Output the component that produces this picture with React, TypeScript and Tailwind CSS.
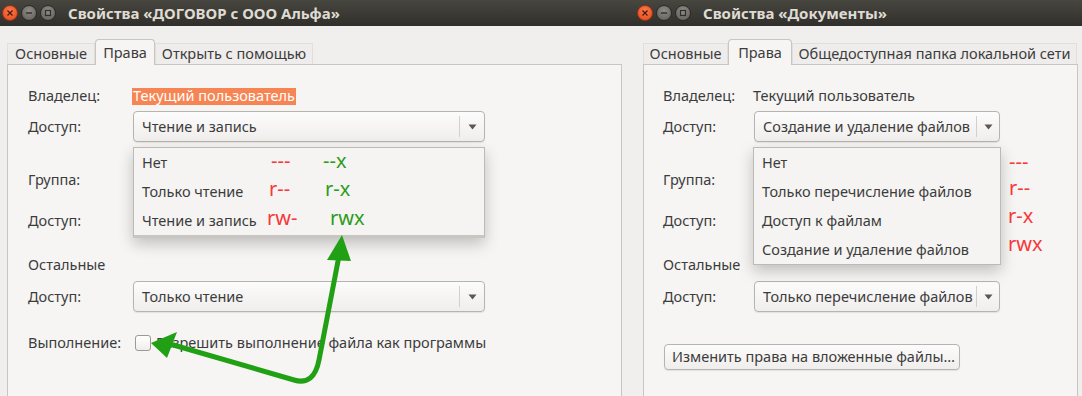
import type { ReactNode } from 'react';

const font = "font-['Noto_Sans','DejaVu_Sans',sans-serif]";

function WindowButtons() {
  return (
    <div className="flex items-center gap-[3px]">
      <div className="w-[16px] h-[16px] rounded-full bg-[radial-gradient(circle_at_50%_35%,#fb7a4a,#e2471b)] border border-[#9e3312] flex items-center justify-center">
        <svg width="8" height="8" viewBox="0 0 8 8">
          <path d="M1.5 1.5L6.5 6.5M6.5 1.5L1.5 6.5" stroke="#4a1a0c" strokeWidth="1.3" />
        </svg>
      </div>
      <div className="w-[16px] h-[16px] rounded-full bg-[radial-gradient(circle_at_50%_35%,#8f8c86,#5e5b56)] border border-[#2c2b28] flex items-center justify-center">
        <svg width="8" height="8" viewBox="0 0 8 8">
          <path d="M1 4H7" stroke="#2f2e2b" strokeWidth="1.4" />
        </svg>
      </div>
      <div className="w-[16px] h-[16px] rounded-full bg-[radial-gradient(circle_at_50%_35%,#8f8c86,#5e5b56)] border border-[#2c2b28] flex items-center justify-center">
        <svg width="8" height="8" viewBox="0 0 8 8">
          <rect x="1.5" y="1.5" width="5" height="5" fill="none" stroke="#2f2e2b" strokeWidth="1.2" />
        </svg>
      </div>
    </div>
  );
}

function TitleBar({ title }: { title: string }) {
  return (
    <div className="h-[26px] flex items-center pl-[2px] bg-gradient-to-b from-[#47463f] to-[#302f2b]">
      <WindowButtons />
      <div className="ml-[12px] text-[15px] font-bold text-[#dfdbd2] leading-none">{title}</div>
    </div>
  );
}

type Tab = { label: string; w: string; active?: boolean };

function Tabs({ tabs }: { tabs: Tab[] }) {
  return (
    <div className="flex items-end h-[26px]">
      {tabs.map((t) =>
        t.active ? (
          <div
            key={t.label}
            className={`${t.w} h-[26px] relative z-10 -mb-px flex items-center justify-center rounded-t-[4px] border border-b-0 border-[#c9c5c0] bg-[#f6f5f4] text-[14.5px] text-[#3c3c3c]`}
          >
            {t.label}
          </div>
        ) : (
          <div
            key={t.label}
            className={`${t.w} h-[21px] flex items-center justify-center border-l border-r border-t border-[#e2dfdb] bg-[#eeedeb] text-[14.5px] text-[#3c3c3c] whitespace-nowrap`}
          >
            {t.label}
          </div>
        )
      )}
      <div className="flex-1" />
    </div>
  );
}

function Combo({ w, value, sep, children }: { w: string; value: string; sep: string; children?: ReactNode }) {
  return (
    <div className={`${w} relative h-[31px]`}>
      <div className="h-full flex items-center rounded-[4px] border border-[#b7b3ad] bg-gradient-to-b from-[#fdfcfc] to-[#efeeec] shadow-[0_1px_1px_rgba(0,0,0,0.08)]">
        <div className="flex-1 pl-[8px] text-[14.5px] text-[#3c3c3c] whitespace-nowrap overflow-hidden">{value}</div>
        <div className={`${sep} h-[21px] border-l border-[#d3d0cb] flex items-center justify-center`}>
          <svg width="9" height="6" viewBox="0 0 9 6">
            <path d="M0.5 0.5H8.5L4.5 5.5Z" fill="#5a5853" />
          </svg>
        </div>
      </div>
      {children}
    </div>
  );
}

function Label({ w, children }: { w: string; children: ReactNode }) {
  return <div className={`${w} shrink-0 text-[14.5px] text-[#3c3c3c]`}>{children}</div>;
}

const red = "absolute text-[20px] leading-none text-[#f6383a] whitespace-nowrap";
const green = "absolute text-[20px] leading-none text-[#2c9c1a] whitespace-nowrap";

function LeftWindow() {
  return (
    <div className="w-[635px] h-full relative flex flex-col">
      <TitleBar title="Свойства «ДОГОВОР с ООО Альфа»" />
      <div className="flex-1 flex flex-col bg-[#f0efed] pl-[7px] pr-[13px] pt-[12px]">
        <Tabs
          tabs={[
            { label: 'Основные', w: 'w-[88px]' },
            { label: 'Права', w: 'w-[60px]', active: true },
            { label: 'Открыть с помощью', w: 'w-[158px]' },
          ]}
        />
        <div className="flex-1 border border-b-0 border-[#c9c5c0] bg-[#f6f5f4] pl-[20px] pt-[22px]">
          <div className="h-[18px] flex items-center">
            <Label w="w-[105px]">Владелец:</Label>
            <span className="-ml-px px-px h-[17px] flex items-center bg-[#f78553] text-white text-[14.5px]">Текущий пользователь</span>
          </div>
          <div className="mt-[6px] flex items-center">
            <Label w="w-[105px]">Доступ:</Label>
            <Combo w="w-[352px]" value="Чтение и запись" sep="w-[25px]">
              <div className="absolute z-20 top-[36px] left-0 right-0 border border-[#bdb9b4] border-b-[3px] border-b-[#c9c6c1] bg-[#f5f4f2] shadow-[0_6px_14px_rgba(0,0,0,0.22)] text-[14.5px] text-[#3c3c3c]">
                <div className="relative h-[29px] flex items-center pl-[8px]">
                  Нет
                  <span className={`${red} left-[137px] top-[3px]`}>---</span>
                  <span className={`${green} left-[189px] top-[3px]`}>--x</span>
                </div>
                <div className="relative h-[29px] flex items-center pl-[8px]">
                  Только чтение
                  <span className={`${red} left-[135px] top-[2px]`}>r--</span>
                  <span className={`${green} left-[191px] top-[2px]`}>r-x</span>
                </div>
                <div className="relative h-[29px] flex items-center pl-[8px]">
                  Чтение и запись
                  <span className={`${red} left-[133px] top-[2px]`}>rw-</span>
                  <span className={`${green} left-[196px] top-[2px]`}>rwx</span>
                </div>
              </div>
            </Combo>
          </div>
          <div className="mt-[29px] h-[18px] flex items-center">
            <Label w="w-[105px]">Группа:</Label>
          </div>
          <div className="mt-[23px] h-[18px] flex items-center">
            <Label w="w-[105px]">Доступ:</Label>
          </div>
          <div className="mt-[26px] h-[18px] flex items-center">
            <Label w="w-[105px]">Остальные</Label>
          </div>
          <div className="mt-[7px] flex items-center">
            <Label w="w-[105px]">Доступ:</Label>
            <Combo w="w-[352px]" value="Только чтение" sep="w-[25px]" />
          </div>
          <div className="mt-[22px] h-[18px] flex items-center">
            <Label w="w-[105px]">Выполнение:</Label>
            <div className="ml-[2px] w-[16px] h-[16px] rounded-[3px] border border-[#9d9994] bg-gradient-to-b from-white to-[#efeeec]" />
            <span className="ml-[5px] text-[14.5px] text-[#3c3c3c] whitespace-nowrap">Разрешить выполнение файла как программы</span>
          </div>
        </div>
      </div>
      <svg className="absolute inset-0 z-30 pointer-events-none" width="635" height="396" viewBox="0 0 635 396">
        <path
          d="M339 256 L319 360 Q314 386 294 380 L170 344"
          fill="none"
          stroke="#22a015"
          strokeWidth="5"
          strokeLinecap="round"
          strokeLinejoin="round"
        />
        <path d="M342 235 L327 260 L351 261 Z" fill="#22a015" />
        <path d="M151 343 L177 332 L167 358 Z" fill="#22a015" />
      </svg>
    </div>
  );
}

function RightWindow() {
  return (
    <div className="flex-1 h-full flex flex-col">
      <TitleBar title="Свойства «Документы»" />
      <div className="flex-1 flex flex-col bg-[#f0efed] pl-[8px] pr-[4px] pt-[12px]">
        <Tabs
          tabs={[
            { label: 'Основные', w: 'w-[85px]' },
            { label: 'Права', w: 'w-[64px]', active: true },
            { label: 'Общедоступная папка локальной сети', w: 'w-[285px]' },
          ]}
        />
        <div className="flex-1 border border-b-0 border-[#c9c5c0] bg-[#f6f5f4] pl-[19px] pt-[22px]">
          <div className="h-[18px] flex items-center">
            <Label w="w-[90px]">Владелец:</Label>
            <span className="text-[14.5px] text-[#3c3c3c]">Текущий пользователь</span>
          </div>
          <div className="mt-[6px] flex items-center">
            <Label w="w-[91px]">Доступ:</Label>
            <Combo w="w-[246px]" value="Создание и удаление файлов" sep="w-[23px]">
              <div className="absolute z-20 top-[36px] -left-px -right-px border border-[#bdb9b4] bg-[#f5f4f2] shadow-[0_6px_14px_rgba(0,0,0,0.22)] text-[14.5px] text-[#3c3c3c]">
                <div className="relative h-[29px] flex items-center pl-[8px]">
                  Нет
                  <span className={`${red} left-[255px] top-[4px]`}>---</span>
                </div>
                <div className="relative h-[29px] flex items-center pl-[8px]">
                  Только перечисление файлов
                  <span className={`${red} left-[255px] top-[1px]`}>r--</span>
                </div>
                <div className="relative h-[29px] flex items-center pl-[8px]">
                  Доступ к файлам
                  <span className={`${red} left-[254px] top-[0px]`}>r-x</span>
                </div>
                <div className="relative h-[29px] flex items-center pl-[8px]">
                  Создание и удаление файлов
                  <span className={`${red} left-[254px] top-[-1px]`}>rwx</span>
                </div>
              </div>
            </Combo>
          </div>
          <div className="mt-[29px] h-[18px] flex items-center">
            <Label w="w-[90px]">Группа:</Label>
          </div>
          <div className="mt-[23px] h-[18px] flex items-center">
            <Label w="w-[90px]">Доступ:</Label>
          </div>
          <div className="mt-[26px] h-[18px] flex items-center">
            <Label w="w-[90px]">Остальные</Label>
          </div>
          <div className="mt-[7px] flex items-center">
            <Label w="w-[91px]">Доступ:</Label>
            <Combo w="w-[246px]" value="Только перечисление файлов" sep="w-[23px]" />
          </div>
          <div className="mt-[32px] ml-px w-[296px] h-[26px] flex items-center pl-[7px] rounded-[4px] border border-[#b7b3ad] bg-gradient-to-b from-[#fdfcfc] to-[#efeeec] shadow-[0_1px_1px_rgba(0,0,0,0.08)] text-[14.5px] text-[#3c3c3c] whitespace-nowrap">
            Изменить права на вложенные файлы…
          </div>
        </div>
      </div>
    </div>
  );
}

export default function App() {
  return (
    <div className={`w-[1082px] h-[396px] overflow-hidden flex bg-[#f0efed] ${font}`}>
      <LeftWindow />
      <RightWindow />
    </div>
  );
}
